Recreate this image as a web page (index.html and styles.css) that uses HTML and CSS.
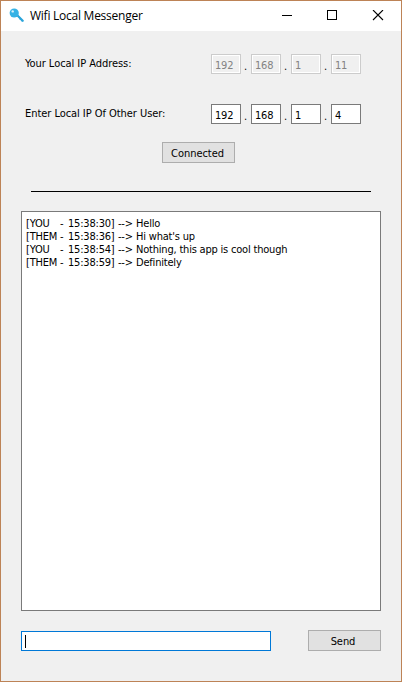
FILE: index.html
```html
<!DOCTYPE html>
<html lang="en">
<head>
<meta charset="utf-8">
<title>Wifi Local Messenger</title>
<link rel="stylesheet" href="styles.css">
</head>
<body>
<div class="window">
  <header class="titlebar">
    <svg class="key" width="16" height="16" viewBox="0 0 16 16"><path d="M8 7l5.7 5.7" stroke="#2ba5da" stroke-width="2.3" stroke-linecap="round"/><path d="M10.8 11.6l1.1-1.1M12.2 13l1-1" stroke="#2ba5da" stroke-width="1.3"/><circle cx="5.2" cy="5" r="4.6" fill="#35b2e5"/><circle cx="3.7" cy="3.4" r="1.2" fill="#d9f1fb"/></svg>
    <h1 class="title">Wifi Local Messenger</h1>
    <nav class="controls">
      <svg width="12" height="12" viewBox="0 0 12 12" shape-rendering="crispEdges"><path d="M2 5.5h10" stroke="#000"/></svg>
      <svg width="12" height="12" viewBox="0 0 12 12" shape-rendering="crispEdges"><path d="M1.5 .5h9v9h-9z" fill="none" stroke="#000"/></svg>
      <svg width="12" height="12" viewBox="0 0 12 12"><path d="M1 0l10 10M11 0L1 10" stroke="#000" stroke-width="1.1"/></svg>
    </nav>
  </header>
  <main class="content">
    <div class="row">
      <span class="label">Your Local IP Address:</span>
      <div class="ip ip-disabled"><span class="octet">192</span><span class="dot">.</span><span class="octet">168</span><span class="dot">.</span><span class="octet">1</span><span class="dot">.</span><span class="octet">11</span></div>
    </div>
    <div class="row row-other">
      <span class="label">Enter Local IP Of Other User:</span>
      <div class="ip"><span class="octet">192</span><span class="dot">.</span><span class="octet">168</span><span class="dot">.</span><span class="octet">1</span><span class="dot">.</span><span class="octet">4</span></div>
    </div>
    <button class="button connect">Connected</button>
    <div class="divider"></div>
    <section class="log">
      <div class="line"><span>[YOU</span><span>-</span><span class="time">15:38:30]</span><span class="arrow">--&gt;</span><span>Hello</span></div>
      <div class="line"><span>[THEM</span><span>-</span><span class="time">15:38:36]</span><span class="arrow">--&gt;</span><span>Hi what's up</span></div>
      <div class="line"><span>[YOU</span><span>-</span><span class="time">15:38:54]</span><span class="arrow">--&gt;</span><span>Nothing, this app is cool though</span></div>
      <div class="line"><span>[THEM</span><span>-</span><span class="time">15:38:59]</span><span class="arrow">--&gt;</span><span>Definitely</span></div>
    </section>
    <footer class="composer">
      <div class="entry"><span class="caret"></span></div>
      <button class="button send">Send</button>
    </footer>
  </main>
</div>
</body>
</html>
```
FILE: styles.css
```css
* { box-sizing: border-box; }
body { margin: 0; font: 11px/13px "DejaVu Sans Condensed", "DejaVu Sans", sans-serif; font-stretch: condensed; color: #000; letter-spacing: -0.2px; }
.window { width: 402px; height: 682px; border: 1px solid #bd8356; background: #f0f0f0; }
.titlebar { height: 30px; background: #fff; display: flex; align-items: center; padding-left: 8px; }
.key { margin-top: -1px; }
.title { margin: 0 0 0 5px; font: 12px/16px "Open Sans", sans-serif; letter-spacing: -0.25px; white-space: nowrap; }
.controls { margin-left: auto; display: flex; gap: 34px; padding-right: 17px; }
.content { padding: 23px 20px 0; }
.row { display: flex; align-items: center; justify-content: space-between; height: 20px; padding: 0 20px 0 4px; }
.row-other { margin-top: 30px; }
.label { white-space: nowrap; letter-spacing: -0.05px; padding-bottom: 2px; }
.ip { display: flex; }
.octet { width: 30px; height: 20px; border: 1px solid #7a7a7a; background: #fff; padding: 4px 0 0 3px; }
.dot { width: 10px; padding: 6px 0 0 3px; }
.ip-disabled .octet { border-color: #ccc; background: #f0f0f0; color: #838383; box-shadow: inset 0 0 0 1px #fff; }
.button { display: block; width: 73px; height: 21px; padding: 1px 0 0; border: 1px solid #adadad; border-radius: 0; background: #e1e1e1; color: #000; font: inherit; letter-spacing: -0.05px; }
.send { padding-right: 3px; }
.connect { margin: 18px 0 0 141px; padding-right: 2px; }
.divider { height: 1px; margin: 28px 10px 19px; background: #000; }
.log { height: 400px; border: 1px solid #7a7a7a; background: #fff; padding: 5px 4px; }
.line { display: grid; grid-template-columns: 34px 8px 50px 18px 1fr; height: 13px; white-space: nowrap; }
.composer { display: flex; justify-content: space-between; align-items: flex-end; margin-top: 19px; }
.entry { width: 250px; height: 20px; border: 1px solid #0078d7; background: #fff; padding: 3px; }
.caret { display: block; width: 1px; height: 13px; background: #000; }
```
